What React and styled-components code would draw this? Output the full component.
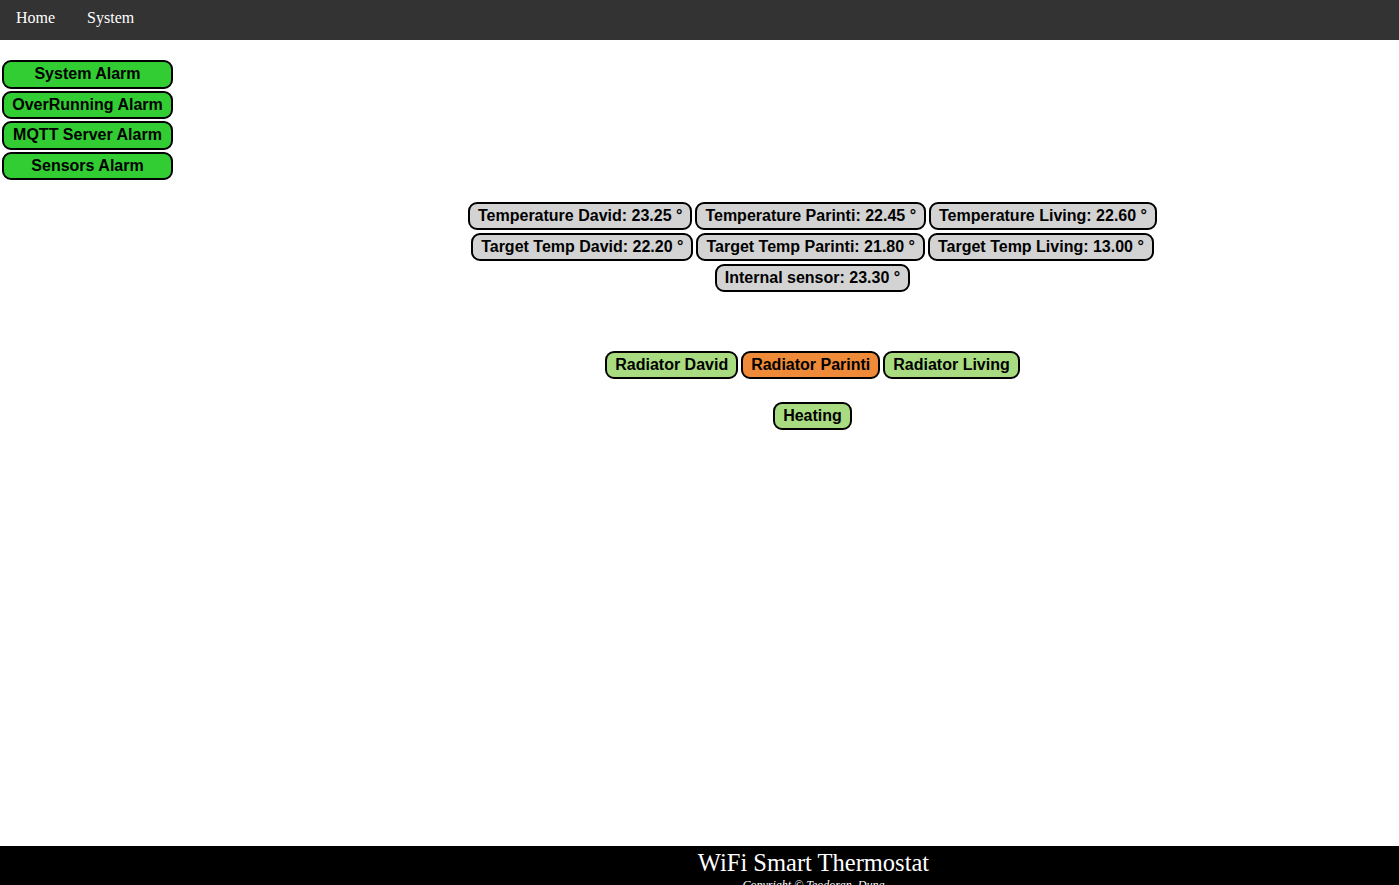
import styled, { createGlobalStyle } from "styled-components";

const GlobalStyle = createGlobalStyle`
    html, body {
        margin: 0;
        padding: 0;
        background: #fff;
        font-family: "Liberation Serif", "Times New Roman", serif;
    }
`

const temps = [
    ["Temperature David: 23.25 °", "Temperature Parinti: 22.45 °", "Temperature Living: 22.60 °"],
    ["Target Temp David: 22.20 °", "Target Temp Parinti: 21.80 °", "Target Temp Living: 13.00 °"],
    ["Internal sensor: 23.30 °"],
]

const alarms = ["System Alarm", "OverRunning Alarm", "MQTT Server Alarm", "Sensors Alarm"]

function App() {
    return (
        <Page>
            <GlobalStyle />
            <NavBar>
                <NavLink>Home</NavLink>
                <NavLink>System</NavLink>
            </NavBar>
            <Body>
                <Sidebar>
                    {alarms.map((a) => (
                        <AlarmButton key={a}>{a}</AlarmButton>
                    ))}
                </Sidebar>
                <Main>
                    <Readings>
                        {temps.map((row, i) => (
                            <Row key={i}>
                                {row.map((t) => (
                                    <Pill key={t} $bg="#d3d3d3">{t}</Pill>
                                ))}
                            </Row>
                        ))}
                    </Readings>
                    <Radiators>
                        <Pill $bg="#a9dc81">Radiator David</Pill>
                        <Pill $bg="#ee8a38">Radiator Parinti</Pill>
                        <Pill $bg="#a9dc81">Radiator Living</Pill>
                    </Radiators>
                    <HeatingRow>
                        <Pill $bg="#a9dc81">Heating</Pill>
                    </HeatingRow>
                </Main>
            </Body>
            <Footer>
                <FooterSpacer />
                <FooterText>
                    <FooterTitle>WiFi Smart Thermostat</FooterTitle>
                    <Copyright>Copyright © Teodoran_Dung</Copyright>
                </FooterText>
            </Footer>
        </Page>
    );
}

export default App;

const Page = styled.div`
    min-height: 100vh;
    display: flex;
    flex-direction: column;
    overflow: hidden;
`

const NavBar = styled.div`
    background: #333;
    height: 40px;
    box-sizing: border-box;
    padding-bottom: 4px;
    display: flex;
    align-items: center;
`

const NavLink = styled.a`
    color: #fff;
    font-size: 16px;
    padding: 0 16px;
    cursor: pointer;
`

const Body = styled.div`
    flex: 1;
    display: flex;
`

const Sidebar = styled.div`
    width: 226px;
    padding: 20px 0 0 2px;
    box-sizing: border-box;
    display: flex;
    flex-direction: column;
    gap: 2px;
`

const AlarmButton = styled.div`
    width: 171px;
    height: 28.5px;
    box-sizing: border-box;
    background: #32cd32;
    border: 2px solid #000;
    border-radius: 9px;
    font-family: "Liberation Sans", Arial, sans-serif;
    font-weight: bold;
    font-size: 16px;
    display: flex;
    align-items: center;
    justify-content: center;
    color: #000;
`

const Main = styled.div`
    flex: 1;
    display: flex;
    flex-direction: column;
    align-items: center;
    padding-top: 162px;
`

const Readings = styled.div`
    display: flex;
    flex-direction: column;
    gap: 3px;
`

const Row = styled.div`
    display: flex;
    justify-content: center;
    gap: 3px;
`

const Pill = styled.div`
    height: 28px;
    box-sizing: border-box;
    padding: 0 8px;
    background: ${(p) => p.$bg};
    border: 2px solid #000;
    border-radius: 9px;
    font-family: "Liberation Sans", Arial, sans-serif;
    font-weight: bold;
    font-size: 16px;
    display: flex;
    align-items: center;
    color: #000;
    white-space: nowrap;
`

const Radiators = styled.div`
    display: flex;
    gap: 3px;
    margin-top: 59px;
`

const HeatingRow = styled.div`
    display: flex;
    margin-top: 23px;
`

const Footer = styled.div`
    background: #000;
    height: 39px;
    display: flex;
    overflow: hidden;
`

const FooterSpacer = styled.div`
    width: 228px;
`

const FooterText = styled.div`
    flex: 1;
    display: flex;
    flex-direction: column;
    align-items: center;
    color: #fff;
`

const FooterTitle = styled.div`
    font-size: 24.5px;
    line-height: 30px;
    margin-top: 2px;
`

const Copyright = styled.div`
    font-size: 12px;
    font-style: italic;
    line-height: 14px;
`
